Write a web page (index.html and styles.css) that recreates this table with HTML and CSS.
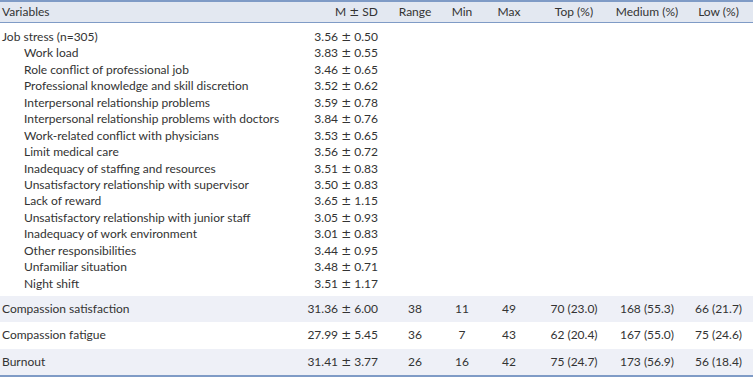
FILE: index.html
```html
<!DOCTYPE html>
<html>
<head>
<meta charset="utf-8">
<link rel="stylesheet" href="styles.css">
</head>
<body>
<table class="stats">
  <colgroup>
    <col class="c-var"><col class="c-msd"><col class="c-range"><col class="c-min"><col class="c-max"><col class="c-top"><col class="c-med"><col class="c-low">
  </colgroup>
  <thead>
    <tr>
      <th class="var">Variables</th>
      <th class="msd">M <span class="pm">±</span> SD</th>
      <th>Range</th>
      <th>Min</th>
      <th>Max</th>
      <th>Top (%)</th>
      <th>Medium (%)</th>
      <th>Low (%)</th>
    </tr>
  </thead>
  <tbody class="block">
    <tr class="first"><td class="var">Job stress (n=305)</td><td class="msd">3.56 <span class="pm">±</span> 0.50</td><td></td><td></td><td></td><td></td><td></td><td></td></tr>
    <tr><td class="var sub">Work load</td><td class="msd">3.83 <span class="pm">±</span> 0.55</td><td></td><td></td><td></td><td></td><td></td><td></td></tr>
    <tr><td class="var sub">Role conflict of professional job</td><td class="msd">3.46 <span class="pm">±</span> 0.65</td><td></td><td></td><td></td><td></td><td></td><td></td></tr>
    <tr><td class="var sub">Professional knowledge and skill discretion</td><td class="msd">3.52 <span class="pm">±</span> 0.62</td><td></td><td></td><td></td><td></td><td></td><td></td></tr>
    <tr><td class="var sub">Interpersonal relationship problems</td><td class="msd">3.59 <span class="pm">±</span> 0.78</td><td></td><td></td><td></td><td></td><td></td><td></td></tr>
    <tr><td class="var sub">Interpersonal relationship problems with doctors</td><td class="msd">3.84 <span class="pm">±</span> 0.76</td><td></td><td></td><td></td><td></td><td></td><td></td></tr>
    <tr><td class="var sub">Work-related conflict with physicians</td><td class="msd">3.53 <span class="pm">±</span> 0.65</td><td></td><td></td><td></td><td></td><td></td><td></td></tr>
    <tr><td class="var sub">Limit medical care</td><td class="msd">3.56 <span class="pm">±</span> 0.72</td><td></td><td></td><td></td><td></td><td></td><td></td></tr>
    <tr><td class="var sub">Inadequacy of staffing and resources</td><td class="msd">3.51 <span class="pm">±</span> 0.83</td><td></td><td></td><td></td><td></td><td></td><td></td></tr>
    <tr><td class="var sub">Unsatisfactory relationship with supervisor</td><td class="msd">3.50 <span class="pm">±</span> 0.83</td><td></td><td></td><td></td><td></td><td></td><td></td></tr>
    <tr><td class="var sub">Lack of reward</td><td class="msd">3.65 <span class="pm">±</span> 1.15</td><td></td><td></td><td></td><td></td><td></td><td></td></tr>
    <tr><td class="var sub">Unsatisfactory relationship with junior staff</td><td class="msd">3.05 <span class="pm">±</span> 0.93</td><td></td><td></td><td></td><td></td><td></td><td></td></tr>
    <tr><td class="var sub">Inadequacy of work environment</td><td class="msd">3.01 <span class="pm">±</span> 0.83</td><td></td><td></td><td></td><td></td><td></td><td></td></tr>
    <tr><td class="var sub">Other responsibilities</td><td class="msd">3.44 <span class="pm">±</span> 0.95</td><td></td><td></td><td></td><td></td><td></td><td></td></tr>
    <tr><td class="var sub">Unfamiliar situation</td><td class="msd">3.48 <span class="pm">±</span> 0.71</td><td></td><td></td><td></td><td></td><td></td><td></td></tr>
    <tr class="last"><td class="var sub">Night shift</td><td class="msd">3.51 <span class="pm">±</span> 1.17</td><td></td><td></td><td></td><td></td><td></td><td></td></tr>
  </tbody>
  <tbody class="singles">
    <tr class="stripe"><td class="var">Compassion satisfaction</td><td class="msd">31.36 <span class="pm">±</span> 6.00</td><td>38</td><td>11</td><td>49</td><td>70 (23.0)</td><td>168 (55.3)</td><td>66 (21.7)</td></tr>
    <tr class="plain"><td class="var">Compassion fatigue</td><td class="msd">27.99 <span class="pm">±</span> 5.45</td><td>36</td><td>7</td><td>43</td><td>62 (20.4)</td><td>167 (55.0)</td><td>75 (24.6)</td></tr>
    <tr class="stripe"><td class="var">Burnout</td><td class="msd">31.41 <span class="pm">±</span> 3.77</td><td>26</td><td>16</td><td>42</td><td>75 (24.7)</td><td>173 (56.9)</td><td>56 (18.4)</td></tr>
  </tbody>
</table>
</body>
</html>
```

FILE: styles.css
```css
html, body {
  margin: 0;
  padding: 0;
  background: #ffffff;
}

.stats {
  width: 753px;
  border-collapse: collapse;
  table-layout: fixed;
  font-family: Lato, "Liberation Sans", sans-serif;
  font-size: 12px;
  color: #333333;
  border-top: 2px solid #7f9bc6;
  border-bottom: 2px solid #7f9bc6;
}

.c-var { width: 300px; }
.c-msd { width: 86px; }
.c-range { width: 58px; }
.c-min { width: 36px; }
.c-max { width: 58px; }
.c-top { width: 72px; }
.c-med { width: 74px; }
.c-low { width: 69px; }

.stats th,
.stats td {
  padding: 0;
  text-align: center;
  font-weight: normal;
  white-space: nowrap;
}

.stats th.var,
.stats td.var {
  text-align: left;
  padding-left: 2px;
}

.stats th.msd,
.stats td.msd {
  text-align: right;
  padding-right: 8px;
}

.pm {
  font-family: "DejaVu Sans", sans-serif;
  font-size: 12px;
}

.stats td.sub {
  padding-left: 24px;
}

.stats thead tr {
  background: #e3e8f1;
  border-bottom: 1px solid #7f9bc6;
}

.stats thead th {
  height: 20px;
  line-height: 20px;
}

.block td {
  height: 16.47px;
  line-height: 16.47px;
}

.block tr.first td {
  padding-top: 5.8px;
}

.block tr.last td {
  padding-bottom: 3.7px;
}

.singles td {
  line-height: 16px;
}

.singles tr.stripe td {
  height: 26px;
  background: #eef0f7;
}

.singles tr.plain td {
  height: 27px;
}
```
